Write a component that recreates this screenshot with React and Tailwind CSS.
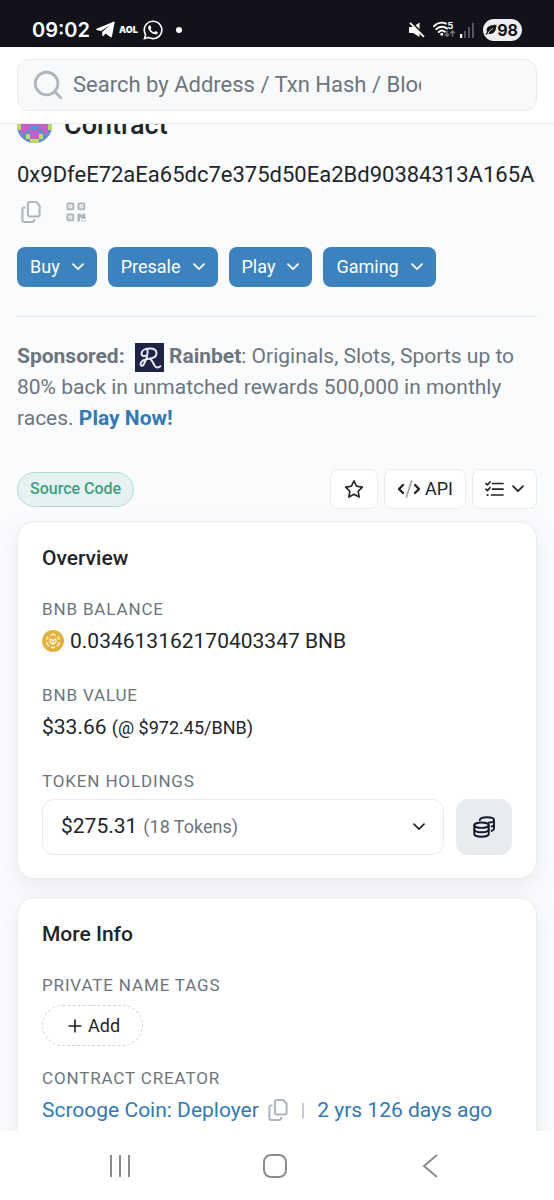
import { FaRegCopy, FaRegStar, FaWhatsapp } from 'react-icons/fa6';
import { Plus, Search } from 'lucide-react';

const menus = ['Buy', 'Presale', 'Play', 'Gaming'];

// 8x8 identicon: g = green, b = blue, p = pink base
const identicon = [
    'gbbppbbg',
    'pgpbbpgp',
    'bppggppb',
    'gppppppg',
    'gppbbppg',
    'bpbppbpb',
    'bbgppgbb',
    'bbbggbbb'
];

const Identicon = () => (
    <svg viewBox="0 0 8 8" className="size-[35px] rounded-full" shapeRendering="crispEdges">
        <rect width="8" height="8" fill="#c55fc8"/>
        {identicon.map((row, y) => row.split('').map((c, x) => c !== 'p' && (
            <rect key={`${x}-${y}`} x={x} y={y} width="1" height="1" fill={c === 'g' ? '#b9dc62' : '#5b93d0'}/>
        )))}
    </svg>
);

const Chevron = () => (
    <svg viewBox="0 0 12 8" className="h-2 w-3 shrink-0" fill="none" stroke="currentColor" strokeWidth="1.700" strokeLinecap="round" strokeLinejoin="round">
        <path d="M1 1.200l5 5 5-5"/>
    </svg>
);

const QrIcon = () => (
    <svg viewBox="0 0 20 20" className="size-5" fill="none" stroke="#adb5bd" strokeWidth="2">
        <rect x="1.500" y="1.500" width="5.800" height="5.800" rx="1"/>
        <rect x="12.500" y="1.500" width="5.800" height="5.800" rx="1"/>
        <rect x="1.500" y="12.500" width="5.800" height="5.800" rx="1"/>
        <g fill="#adb5bd" stroke="none">
            <path d="M3.700 3.700h1.500v1.500H3.700zM14.700 3.700h1.500v1.500h-1.500zM3.700 14.700h1.500v1.500H3.700z"/>
            <path d="M11.500 11.500h3.200v1.300h2v-1.300h2.800v5.200h-4.200v-1.300h-1.300v4.100h-2.500zM15.300 18h1.500v1.500h-1.500zM18 18h1.500v1.500H18z"/>
        </g>
    </svg>
);

const RainbetLogo = () => (
    <svg viewBox="0 0 29 29" className="ml-[5px] inline-block size-[29px] align-middle" fill="none" stroke="#e8eaf6" strokeWidth="2" strokeLinecap="round" strokeLinejoin="round">
        <rect width="29" height="29" fill="#1f2447" stroke="none"/>
        <path d="M12.500 6.500C13 12 10.500 18.500 8.500 21.800c-1.200 1.700-3.500.7-2.900-1.300C6.500 17.500 10 16.300 14 15.800c4.500-.6 7.500-2 7.500-5.600 0-3-2.800-4.700-6.500-4.700-4.500 0-8.500 1.800-8.500 5 0 2.200 2 3.200 3.800 2.200"/>
        <path d="M15 15.800c2.500 1.200 3 4.700 4.800 7.200 1.500 1.900 4 2.200 5.700.2"/>
    </svg>
);

const BnbIcon = () => (
    <svg viewBox="0 0 22 22" className="size-[22px]" fill="none" stroke="#fff" strokeWidth="1.100" strokeLinejoin="round">
        <circle cx="11" cy="11" r="11" fill="#e3b23c" stroke="none"/>
        <path d="M8.600 5.400 11 4l2.400 1.400M15.500 6.600 17 7.500v2.600M17 12v2.500l-2.200 1.300M13.200 16.700 11 18l-2.200-1.300M7.200 15.800 5 14.500V12M5 10.100V7.500l1.500-.9"/>
        <path d="M7.500 8.400 11 10.400l3.500-2M11 10.400v4.300M8 8.800v3.600l3 1.800 3-1.800V8.800"/>
    </svg>
);

const CoinsIcon = () => (
    <svg viewBox="0 0 22 22" className="size-[22px]" fill="none" stroke="#10182c" strokeWidth="1.900" strokeLinecap="round">
        <ellipse cx="8.500" cy="9.200" rx="7.200" ry="2.700"/>
        <path d="M1.300 9.200v8.800c0 1.600 3.200 2.800 7.200 2.800s7.200-1.200 7.200-2.800V9.200"/>
        <path d="M1.300 13.600c0 1.600 3.200 2.700 7.200 2.700s7.200-1.100 7.200-2.700"/>
        <path d="M6.800 4.100C7 2.500 10 1.200 14 1.200s7 1.200 7 2.700-2.400 2.500-5.200 2.700M21 3.900v8.900c0 .9-1 1.600-2.400 2.100M21 8.400c0 .9-1 1.700-2.400 2.100"/>
    </svg>
);

const CodeIcon = () => (
    <svg viewBox="0 0 24 20" className="h-5 w-6" fill="none" stroke="#212529" strokeWidth="2.400" strokeLinecap="round" strokeLinejoin="round">
        <path d="M6 6 2 10l4 4M18 6l4 4-4 4"/>
        <path d="M14.500 2l-5 16" stroke="#a6a8aa" strokeWidth="1.800"/>
    </svg>
);

const ListIcon = () => (
    <svg viewBox="0 0 19 16" className="h-4 w-[19px]" fill="none" stroke="#212529" strokeWidth="1.700" strokeLinecap="round" strokeLinejoin="round">
        <path d="M7.500 2.500H18M7.500 8.200H18M6.500 14H18"/>
        <path d="M1 2.500l1.400 1.400L5 1M1 8.200l1.400 1.400L5 6.700"/>
        <circle cx="2.600" cy="14" r="1.100" fill="#212529" stroke="none"/>
    </svg>
);

const StatusBar = () => (
    <div className="flex h-[47px] shrink-0 items-center justify-between bg-[#12131a] px-8 pt-3 font-['Inter'] text-white">
        <div className="flex items-center">
            <span className="text-xl font-semibold">09:02</span>
            <svg viewBox="0 0 19 17" className="ml-[6px] h-[17px] w-[19px]" fill="#fff">
                <path d="M.6 7.800 17.500.700c.8-.3 1.300.2 1.100 1l-2.600 13.600c-.2 1-.9 1.200-1.700.7l-4.600-3.400-2.300 2.300c-.6.500-1 .3-1-.5l-.2-3.500L14 4 5 9.900.7 8.900c-.8-.2-.8-.8-.1-1.100z"/>
            </svg>
            <span className="ml-1 text-[9px] font-black">AOL</span>
            <FaWhatsapp className="ml-1 size-[22px]"/>
            <span className="ml-3 size-[6px] rounded-full bg-white"/>
        </div>
        <div className="flex items-center">
            <svg viewBox="0 0 16 16" className="size-4" fill="#fff">
                <path d="M0 5h4l6.500-4.500V15L4 11H0z"/>
                <path d="M2 0l15 15" stroke="#12131a" strokeWidth="2"/>
                <path d="M1 .800 15 14.800" stroke="#fff" strokeWidth="1.800"/>
            </svg>
            <svg viewBox="0 0 23 17" className="ml-2 h-[17px] w-[23px]" fill="none" stroke="#fff" strokeWidth="1.900" strokeLinecap="round">
                <path d="M1 5.200C4.200 1.600 9.200.900 13 2.600M3.300 8.200c2.800-3 7.600-3.300 10.800-.7M5.700 11c1.800-1.800 4.400-1.900 6.200-.3"/>
                <circle cx="8.800" cy="13.200" r=".6"/>
                <path d="M14 10v5m-1.800-1.500L14 15.300l1.800-1.800M19.500 15v-5m-1.800 1.700 1.800-1.800 1.800 1.800" stroke="#77787d" strokeWidth="1.400"/>
                <text x="14.500" y="8" fill="#fff" stroke="none" fontSize="9" fontWeight="700">5</text>
            </svg>
            <svg viewBox="0 0 15 16" className="ml-1 h-4 w-[15px]" fill="#5b5c62">
                <rect x="0" y="12" width="2.200" height="4" fill="#fff"/>
                <rect x="4" y="9" width="1.800" height="7"/>
                <rect x="8" y="5" width="1.800" height="11"/>
                <rect x="12" y="1" width="1.800" height="15"/>
            </svg>
            <span className="ml-2 flex h-[22px] items-center rounded-full bg-[#eeeeef] pr-1 pl-[2px] text-base font-bold text-[#12131a]">
                <svg viewBox="0 0 12 12" className="size-3" fill="#12131a">
                    <path d="M11.500.800C7 1 2.500 1.500 1.700 5.200c-.2 1 0 2 .4 2.800L.5 10l.8 1L3 9.300c4 1.900 8.300-.4 8.500-8.500z"/>
                    <path d="M3 9c1.500-2 3-3.200 5-4.500" stroke="#eeeeef" strokeWidth="1" fill="none"/>
                </svg>
                98
            </span>
        </div>
    </div>
);

const Label = ({ children }) => (
    <h3 className="text-[17px] leading-6 tracking-wider text-[#6c757d] uppercase">{children}</h3>
);

const Card = ({ title, children }) => (
    <section className="rounded-[18px] border border-[#e9ecef] bg-white px-6 pt-5 pb-[23px] shadow-[0_8px_20px_rgba(160,165,200,0.18)]">
        <h2 className="text-[21px] leading-8 font-medium">{title}</h2>
        {children}
    </section>
);

const App = () => {
    return (
        <div className="flex h-screen flex-col bg-[#fafbfd] font-['Roboto',sans-serif] text-[#212529]">
            <StatusBar/>
            <header className="shrink-0 border-b border-[#e9ecef] bg-white px-[17px] py-3">
                <label className="flex h-[52px] items-center rounded-xl border border-[#e9ecef] bg-[#f8f9fb] pr-[115px] pl-[13px]">
                    <Search className="size-[34px] shrink-0 text-[#adb5bd]" strokeWidth={2}/>
                    <input
                        type="text"
                        aria-label="Search"
                        placeholder="Search by Address / Txn Hash / Block / Token"
                        className="ml-2 min-w-0 flex-1 bg-transparent pb-[2px] text-[22px] outline-none placeholder:text-[#6c757d]"
                    />
                </label>
            </header>

            <main className="min-h-0 flex-1 overflow-hidden px-[17px]">
                {/* page title is scrolled halfway under the header */}
                <div className="-mt-[17px] flex h-9 items-center gap-3">
                    <Identicon/>
                    <h1 className="text-[27px] font-medium">Contract</h1>
                </div>

                <p className="mt-4 text-[22px] leading-8 break-all">0x9DfeE72aEa65dc7e375d50Ea2Bd90384313A165A</p>
                <div className="mt-2 flex h-[26px] items-center gap-6 pl-[3px]">
                    <button aria-label="Copy address"><FaRegCopy className="size-[22px] text-[#adb5bd]"/></button>
                    <button aria-label="Show QR code"><QrIcon/></button>
                </div>

                <div className="mt-[22px] flex flex-wrap gap-[11px]">
                    {menus.map((menu) => (
                        <button key={menu} className="flex h-10 items-center gap-3 rounded-lg bg-[#3b82bf] px-[13px] text-lg text-white">
                            {menu}
                            <Chevron/>
                        </button>
                    ))}
                </div>

                <hr className="mt-[29px] border-[#e3e6e9]"/>

                <p className="mt-6 text-[21px] leading-[31px] text-[#6c757d]">
                    <b>Sponsored:</b> <RainbetLogo/> <b>Rainbet</b>: Originals, Slots, Sports up to 80% back in unmatched rewards 500,000 in monthly races. <a href="#" className="font-bold text-[#3279b7]">Play Now!</a>
                </p>

                <div className="mt-[35px] flex items-center justify-between">
                    <a href="#" className="flex h-[35px] items-center rounded-full border border-[#b5dbd0] bg-[#e5f2f1] px-3 text-base font-medium text-[#3d9f80]">Source Code</a>
                    <div className="flex gap-[6px]">
                        <button aria-label="Favorite" className="flex h-10 items-center rounded-lg border border-[#e9ecef] bg-white px-[13px]">
                            <FaRegStar className="size-5"/>
                        </button>
                        <button className="flex h-10 items-center gap-1 rounded-lg border border-[#e9ecef] bg-white px-3 text-lg">
                            <CodeIcon/>
                            API
                        </button>
                        <button aria-label="More options" className="flex h-10 items-center gap-2 rounded-lg border border-[#e9ecef] bg-white px-3">
                            <ListIcon/>
                            <Chevron/>
                        </button>
                    </div>
                </div>

                <div className="mt-3 flex flex-col gap-[18px]">
                    <Card title="Overview">
                        <div className="mt-[23px]">
                            <Label>BNB Balance</Label>
                            <p className="mt-1 flex items-center gap-[6px] text-[21px] leading-8"><BnbIcon/>0.034613162170403347 BNB</p>
                        </div>
                        <div className="mt-[26px]">
                            <Label>BNB Value</Label>
                            <p className="mt-1 text-[21px] leading-8">$33.66 <span className="text-lg">(@ $972.45/BNB)</span></p>
                        </div>
                        <div className="mt-[26px]">
                            <Label>Token Holdings</Label>
                            <div className="mt-[6px] flex gap-3">
                                <button className="flex h-14 flex-1 items-center rounded-xl border border-[#e9ecef] px-[18px] text-[21px]">
                                    $275.31
                                    <span className="mr-auto ml-[6px] text-lg text-[#6c757d]">(18 Tokens)</span>
                                    <Chevron/>
                                </button>
                                <button aria-label="View token holdings" className="flex size-14 items-center justify-center rounded-xl bg-[#e9ecef]">
                                    <CoinsIcon/>
                                </button>
                            </div>
                        </div>
                    </Card>

                    <Card title="More Info">
                        <div className="mt-[23px]">
                            <Label>Private Name Tags</Label>
                            <button className="mt-2 flex h-[41px] items-center gap-[3px] rounded-full border border-dashed border-[#ced4da] px-[22px] text-lg">
                                <Plus className="size-5" strokeWidth={2}/>
                                Add
                            </button>
                        </div>
                        <div className="mt-5">
                            <Label>Contract Creator</Label>
                            <div className="mt-1 flex items-center text-[21px] leading-8 text-[#3279b7]">
                                <a href="#">Scrooge Coin: Deployer</a>
                                <button aria-label="Copy creator" className="ml-2"><FaRegCopy className="size-[22px] text-[#adb5bd]"/></button>
                                <span className="mx-3 text-lg text-[#adb5bd]">|</span>
                                <a href="#">2 yrs 126 days ago</a>
                            </div>
                        </div>
                    </Card>
                </div>
            </main>

            <nav className="grid h-[69px] shrink-0 grid-cols-3 place-items-center bg-white pr-[46px] pl-[42px]">
                <button aria-label="Recent apps">
                    <svg viewBox="0 0 22 24" className="h-6 w-[22px]" stroke="#8b8b8b" strokeWidth="2"><path d="M2 1v22M11 1v22M20 1v22"/></svg>
                </button>
                <button aria-label="Home">
                    <svg viewBox="0 0 24 24" className="size-6" fill="none" stroke="#8b8b8b" strokeWidth="2"><rect x="1" y="1" width="22" height="22" rx="7"/></svg>
                </button>
                <button aria-label="Back">
                    <svg viewBox="0 0 16 24" className="h-6 w-4" fill="none" stroke="#8b8b8b" strokeWidth="2"><path d="M15 1 2 12l13 11"/></svg>
                </button>
            </nav>
        </div>
    );
};

export default App;
